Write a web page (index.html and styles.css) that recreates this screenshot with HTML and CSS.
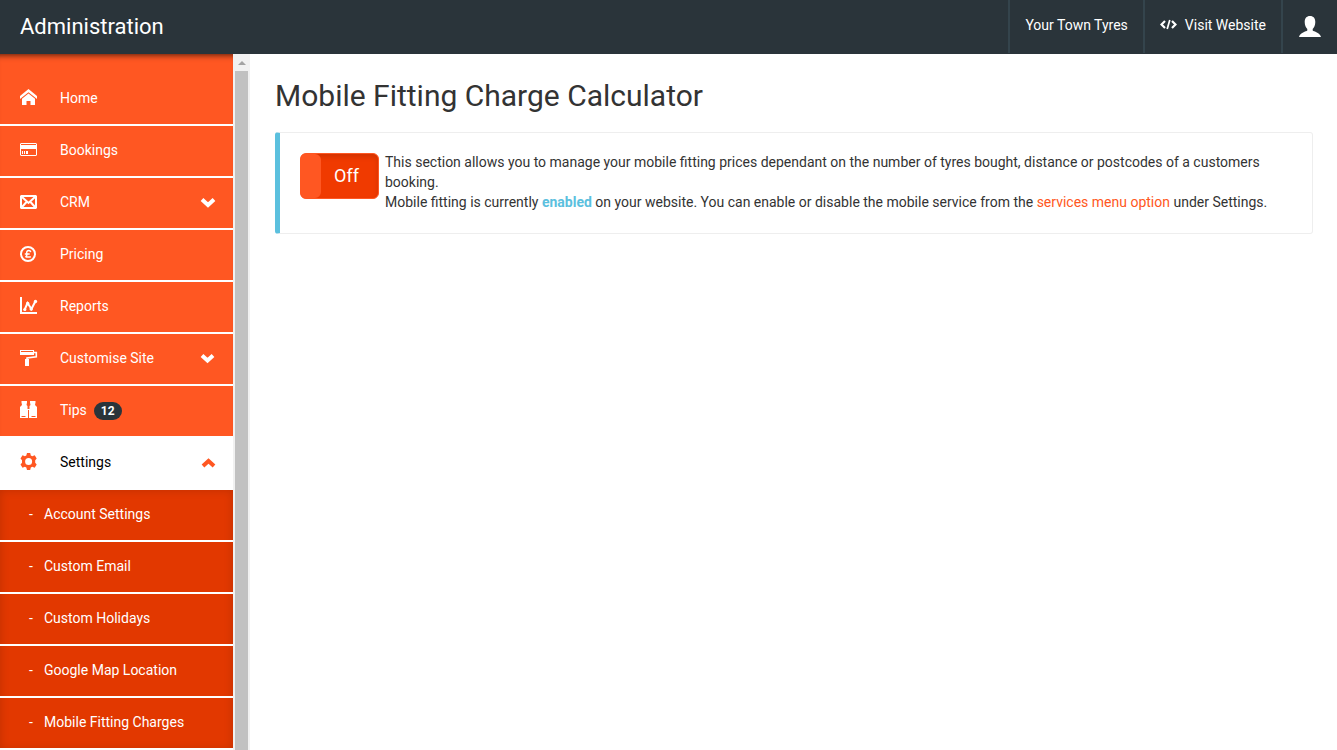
FILE: index.html
```html
<!DOCTYPE html>
<html lang="en">
  <head>
    <meta charset="UTF-8" />
    <meta name="viewport" content="width=device-width, initial-scale=1" />
    <title>Administration</title>
    <link rel="stylesheet" href="styles.css">
  </head>
  <body>
    <header class="topbar">
      <a class="brand" href="#">Administration</a>
      <nav class="top-links">
        <a href="#">Your Town Tyres</a>
        <a href="#">
          <svg class="code-icon" viewBox="0 0 17 12" aria-hidden="true">
            <path d="M5 2 1.500 5.500 5 9M12 2l3.500 3.500L12 9" fill="none" stroke="currentColor" stroke-width="2.200" />
            <path d="M9.800 1 7.200 10" fill="none" stroke="currentColor" stroke-width="1.700" />
          </svg>
          Visit Website
        </a>
        <a href="#" aria-label="Account">
          <svg class="user-icon" viewBox="0 0 24 22" aria-hidden="true">
            <path d="M12 0c3.500 0 5.300 2.200 5.300 6 0 3.200-1.200 5.600-2.600 6.900v1.600c1 1.200 7.300 1.700 8.300 6.500H1c1-4.800 7.300-5.300 8.300-6.500v-1.600C7.900 11.600 6.700 9.200 6.700 6c0-3.800 1.800-6 5.300-6z" />
          </svg>
        </a>
      </nav>
    </header>

    <div class="layout">
      <nav class="sidebar">
        <ul class="menu">
          <li>
            <a href="#">
              <svg class="icon" viewBox="0 0 18 18" aria-hidden="true">
                <path d="M8.500 0 17 7v3L8.500 3.200 0 10V7z" />
                <path d="M8.500 4.500 15 9.700V16h-4.500v-4h-4v4H2V9.700z" />
              </svg>
              Home
            </a>
          </li>
          <li>
            <a href="#">
              <svg class="icon" viewBox="0 0 18 18" aria-hidden="true">
                <path fill-rule="evenodd" d="M1 2h15l1 1v11l-1 1H1l-1-1V3zM1 3v1h15V3zM1 8v6h15V8z" />
                <path d="M2 10h1v3H2zM4 10h1v3H4zM6 10h2v3H6z" />
              </svg>
              Bookings
            </a>
          </li>
          <li>
            <a href="#">
              <svg class="icon" viewBox="0 0 18 18" aria-hidden="true">
                <path fill-rule="evenodd" d="M1 2h15l1 1v12l-1 1H1l-1-1V3zM2 4v10h13V4z" />
                <path d="m2 4 6.500 6L15 4M2 14l4.500-5M15 14l-4.500-5" fill="none" stroke="currentColor" stroke-width="2" />
              </svg>
              CRM
              <svg class="chevron" viewBox="0 0 16 12" aria-hidden="true">
                <path d="m2 3.500 6 5.500 6-5.500" />
              </svg>
            </a>
          </li>
          <li>
            <a href="#">
              <svg class="icon" viewBox="0 0 18 18" aria-hidden="true">
                <circle cx="8" cy="9" r="7" fill="none" stroke="currentColor" stroke-width="2" />
                <path d="M10.700 7.200C10.500 6 9.700 5.600 8.800 5.600 7.300 5.600 6.500 6.600 6.800 8c.4 1.500.4 2.700-1.300 4.100 1.500-.7 3.500.8 5.300-.5M4.800 9h4.900" fill="none" stroke="currentColor" stroke-width="1.500" />
              </svg>
              Pricing
            </a>
          </li>
          <li>
            <a href="#">
              <svg class="icon" viewBox="0 0 18 18" aria-hidden="true">
                <path d="M0 0h2v15h15v2H0z" />
                <path d="m4.500 13 3-7 4 6 4-8" fill="none" stroke="currentColor" stroke-width="2" />
                <circle cx="4.800" cy="12.500" r="1.600" />
                <circle cx="7.700" cy="6.500" r="1.700" />
                <circle cx="11.200" cy="12" r="1.700" />
                <circle cx="15.500" cy="4.500" r="1.700" />
              </svg>
              Reports
            </a>
          </li>
          <li>
            <a href="#">
              <svg class="icon" viewBox="0 0 18 18" aria-hidden="true">
                <path fill-rule="evenodd" d="M0 1h14v5H0zM1 2v1h12V2z" />
                <path d="M14 3.500h2.300v4.200L7 9v2" fill="none" stroke="currentColor" stroke-width="1.600" />
                <path d="M5 10h4v7H5z" />
              </svg>
              Customise Site
              <svg class="chevron" viewBox="0 0 16 12" aria-hidden="true">
                <path d="m2 3.500 5.500 5 5.500-5" />
              </svg>
            </a>
          </li>
          <li>
            <a href="#">
              <svg class="icon" viewBox="0 0 18 18" aria-hidden="true">
                <path fill-rule="evenodd" d="M1.500 0H7v1.500L6.500 4 7.500 5v3h2V5l1-1-.5-2.500V0h5.500v1.500L15 4l2 2v11H9v-8H8v8H0V6l2-2-.5-2.500zM1.500 15v1h4v-1zM11.500 15v1h4v-1z" />
              </svg>
              Tips
              <span class="badge">12</span>
            </a>
          </li>
          <li class="active">
            <a href="#">
              <svg class="icon" viewBox="0 0 18 18" aria-hidden="true">
                <path fill-rule="evenodd" d="m6.300 2.500.7-2.500h3.200l.6 2.500 1.500.8 2.400-1 2 3.200-1.500 1.700v2.600l1.500 1.700-2 3.200-2.400-1-1.500.8-.6 2.500H7l-.7-2.500-1.400-.8-2.400 1-2-3.200L2 9.800V7.200L.5 5.500l2-3.200 2.400 1zM8.600 5a3.500 3.500 0 1 0 0 7 3.500 3.500 0 0 0 0-7z" />
              </svg>
              Settings
              <svg class="chevron" viewBox="0 0 16 12" aria-hidden="true">
                <path d="m3 10 5.500-5 5.500 5" />
              </svg>
            </a>
            <ul class="submenu">
              <li><a href="#">Account Settings</a></li>
              <li><a href="#">Custom Email</a></li>
              <li><a href="#">Custom Holidays</a></li>
              <li><a href="#">Google Map Location</a></li>
              <li><a href="#">Mobile Fitting Charges</a></li>
            </ul>
          </li>
        </ul>
      </nav>
      <div class="scrollbar" aria-hidden="true">
        <div class="scroll-up"></div>
        <div class="scroll-thumb"></div>
      </div>

      <main class="content">
        <h1>Mobile Fitting Charge Calculator</h1>
        <section class="callout">
          <label class="toggle">
            <input type="checkbox" role="switch" />
            <span class="toggle-handle"></span>
            <span class="toggle-text">Off</span>
          </label>
          <p>
            This section allows you to manage your mobile fitting prices dependant on the number of tyres bought, distance or postcodes of a customers booking.<br />
            Mobile fitting is currently <strong>enabled</strong> on your website. You can enable or disable the mobile service from the <a href="#">services menu option</a> under Settings.
          </p>
        </section>
      </main>
    </div>
  </body>
</html>
```

FILE: styles.css
```css
* {
  box-sizing: border-box;
}
body {
  margin: 0;
  height: 100vh;
  display: flex;
  flex-direction: column;
  overflow: hidden;
  font-family: Roboto, "Liberation Sans", sans-serif;
  font-size: 14px;
  line-height: 20px;
  color: #333;
  background-color: #fff;
}
a {
  color: #ff5722;
  text-decoration: none;
}
ul {
  list-style: none;
  margin: 0;
  padding: 0;
}
svg {
  fill: currentColor;
  flex: none;
}

/* top bar */
.topbar {
  display: flex;
  justify-content: space-between;
  flex: none;
  height: 54px;
  padding-bottom: 1px;
  background-color: #2a343a;
}
.brand {
  display: flex;
  align-items: center;
  padding-left: 20px;
  font-size: 22px;
  color: #fff;
}
.top-links {
  display: flex;
}
.top-links a {
  display: flex;
  align-items: center;
  gap: 8px;
  padding: 0 15px 3px;
  border-left: 2px solid #34444c;
  color: #fff;
}
.code-icon {
  width: 17px;
  height: 12px;
}
.user-icon {
  width: 24px;
  height: 22px;
  margin-top: 4px;
}

/* sidebar */
.layout {
  display: flex;
  flex: 1;
  min-height: 0;
}
.sidebar {
  flex: none;
  width: 233px;
  overflow: hidden;
}
.menu {
  padding-top: 20px;
  background-color: #ff5722;
  box-shadow: inset 0 7px 6px -6px rgba(0, 0, 0, 0.7);
}
.menu a {
  display: flex;
  align-items: center;
  height: 52px;
  padding: 0 17px 2px 20px;
  border-bottom: 2px solid #fff;
  color: #fff;
}
.icon {
  width: 18px;
  height: 18px;
  margin-right: 22px;
}
.chevron {
  width: 16px;
  height: 12px;
  margin-left: auto;
}
.chevron path {
  fill: none;
  stroke: currentColor;
  stroke-width: 4;
}
.badge {
  margin-top: 2px;
  margin-left: 7px;
  padding: 0 7px;
  border-radius: 9px;
  font-size: 12px;
  line-height: 18px;
  font-weight: bold;
  background-color: #2a343a;
}
.menu .active > a {
  background-color: #fff;
  color: #000;
}
.active > a svg {
  color: #ff5722;
}
.submenu {
  background-color: #e23800;
  box-shadow: inset 0 0 10px rgba(0, 0, 0, 0.15);
}
.submenu a {
  padding-left: 29px;
}
.submenu a::before {
  content: "-";
  width: 15px;
}
.scrollbar {
  display: flex;
  flex-direction: column;
  flex: none;
  width: 17px;
  padding: 0 2px;
  background-color: #f1f1f1;
}
.scroll-up {
  height: 17px;
  padding-top: 7px;
}
.scroll-up::before {
  content: "";
  display: block;
  width: 0;
  margin: 0 auto;
  border: 4px solid transparent;
  border-top: 0;
  border-bottom-color: #a3a3a3;
}
.scroll-thumb {
  flex: 1;
  background-color: #c1c1c1;
}

/* main content */
.content {
  flex: 1;
  padding: 25px 24px 20px 25px;
}
h1 {
  margin: 0 0 20px;
  font-size: 30px;
  line-height: 33px;
  font-weight: 400;
}
.callout {
  display: flex;
  align-items: center;
  gap: 6px;
  padding: 19px 20px 21px;
  border: 1px solid #eee;
  border-left: 5px solid #5bc0de;
  border-radius: 3px;
}
.callout p {
  flex: 1;
  margin: 0;
}
.callout strong {
  color: #5bc0de;
}
.toggle {
  position: relative;
  display: flex;
  flex: none;
  align-self: flex-start;
  width: 79px;
  height: 46px;
  margin-top: 1px;
  border: 1px solid #ff5722;
  border-radius: 6px;
  background-color: #f03a00;
  box-shadow: inset 0 3px 5px rgba(0, 0, 0, 0.125);
  color: #fff;
  cursor: pointer;
}
.toggle input {
  position: absolute;
  inset: 0;
  width: 100%;
  height: 100%;
  margin: 0;
  opacity: 0;
}
.toggle-handle {
  width: 20px;
  border-radius: 4px 6px 6px 4px;
  background-color: #ff5722;
}
.toggle-text {
  flex: 1;
  padding-right: 6px;
  font-size: 18px;
  line-height: 44px;
  text-align: center;
}
```
